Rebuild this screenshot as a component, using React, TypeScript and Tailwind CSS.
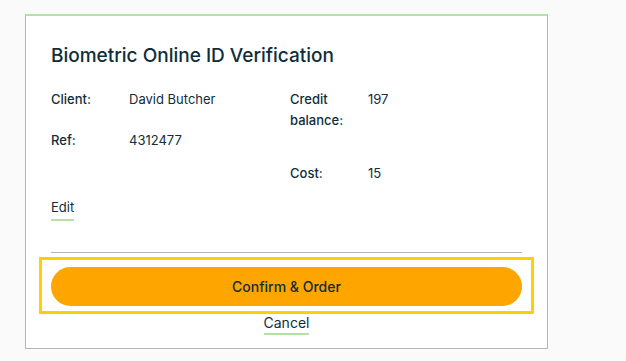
const App = () => {
  return (
    <div
      className="min-h-[361px] bg-[#fafafa] pt-[14px] pl-[25px]"
      style={{ fontFamily: "Inter, 'Liberation Sans', sans-serif" }}
    >
      <div className="w-[523px] bg-white border border-[#b5b5b5] border-t-2 border-t-[#b4e2a5] px-[25px] pt-[26px] pb-[13px] text-[#0f2e3a]">
        <h2 className="text-[19px] leading-[28px] font-medium">
          Biometric Online ID Verification
        </h2>

        <div className="flex mt-[19px] text-[13px] leading-[21px]">
          <div className="w-[239px] flex flex-col">
            <div className="flex">
              <span className="w-[78px] font-medium">Client:</span>
              <span>David Butcher</span>
            </div>
            <div className="flex mt-[20px]">
              <span className="w-[78px] font-medium">Ref:</span>
              <span>4312477</span>
            </div>
          </div>
          <div className="flex flex-col">
            <div className="flex">
              <span className="w-[78px] pr-[16px] font-medium">Credit balance:</span>
              <span>197</span>
            </div>
            <div className="flex mt-[32px]">
              <span className="w-[78px] font-medium">Cost:</span>
              <span>15</span>
            </div>
          </div>
        </div>

        <div className="mt-[10px]">
          <a className="inline-block text-[13px] leading-[21px] border-b-2 border-[#b4e2a5] pb-[1px] cursor-pointer">
            Edit
          </a>
        </div>

        <div className="mt-[31px] h-px bg-[#b5b5b5]" />

        <div className="relative mt-[14px]">
          <div className="absolute -left-[12px] -right-[12px] -top-[10px] -bottom-[8px] border-[3px] border-[#ffd000]" />
          <button className="relative w-full h-[39px] rounded-full bg-[#ffa500] text-[14px] font-medium text-[#0f2e3a]">
            Confirm &amp; Order
          </button>
        </div>

        <div className="mt-[7px] flex justify-center">
          <a className="inline-block text-[14px] leading-[20px] border-b-2 border-[#b4e2a5] cursor-pointer">
            Cancel
          </a>
        </div>
      </div>
    </div>
  );
};

export default App;
